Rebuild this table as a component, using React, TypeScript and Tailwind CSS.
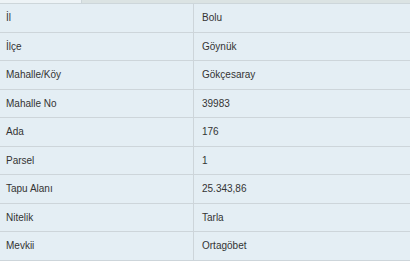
import React from "react";

const rows: [string, string][] = [
  ["İl", "Bolu"],
  ["İlçe", "Göynük"],
  ["Mahalle/Köy", "Gökçesaray"],
  ["Mahalle No", "39983"],
  ["Ada", "176"],
  ["Parsel", "1"],
  ["Tapu Alanı", "25.343,86"],
  ["Nitelik", "Tarla"],
  ["Mevkii", "Ortagöbet"],
];

export default function App() {
  return (
    <div
      className="w-[410px] h-[261px] overflow-hidden bg-[#e4eef4] text-[#333] text-[10px]"
      style={{ fontFamily: '"Liberation Sans", Arial, sans-serif' }}
    >
      <div className="flex h-[4px] border-b border-[#cdd6da]">
        <div className="w-[82px] bg-[#edf3f6] border-r border-[#cdd6da]" />
        <div className="flex-1 bg-[#dbe3e3]" />
      </div>
      <div className="flex flex-col">
        {rows.map(([k, v]) => (
          <div key={k} className="flex h-[28.5px] border-b border-[#cdd5da]">
            <div className="w-[194px] border-r border-[#cdd5da] pl-[6px] flex items-center">
              {k}
            </div>
            <div className="flex-1 pl-[8px] flex items-center">{v}</div>
          </div>
        ))}
      </div>
    </div>
  );
}
